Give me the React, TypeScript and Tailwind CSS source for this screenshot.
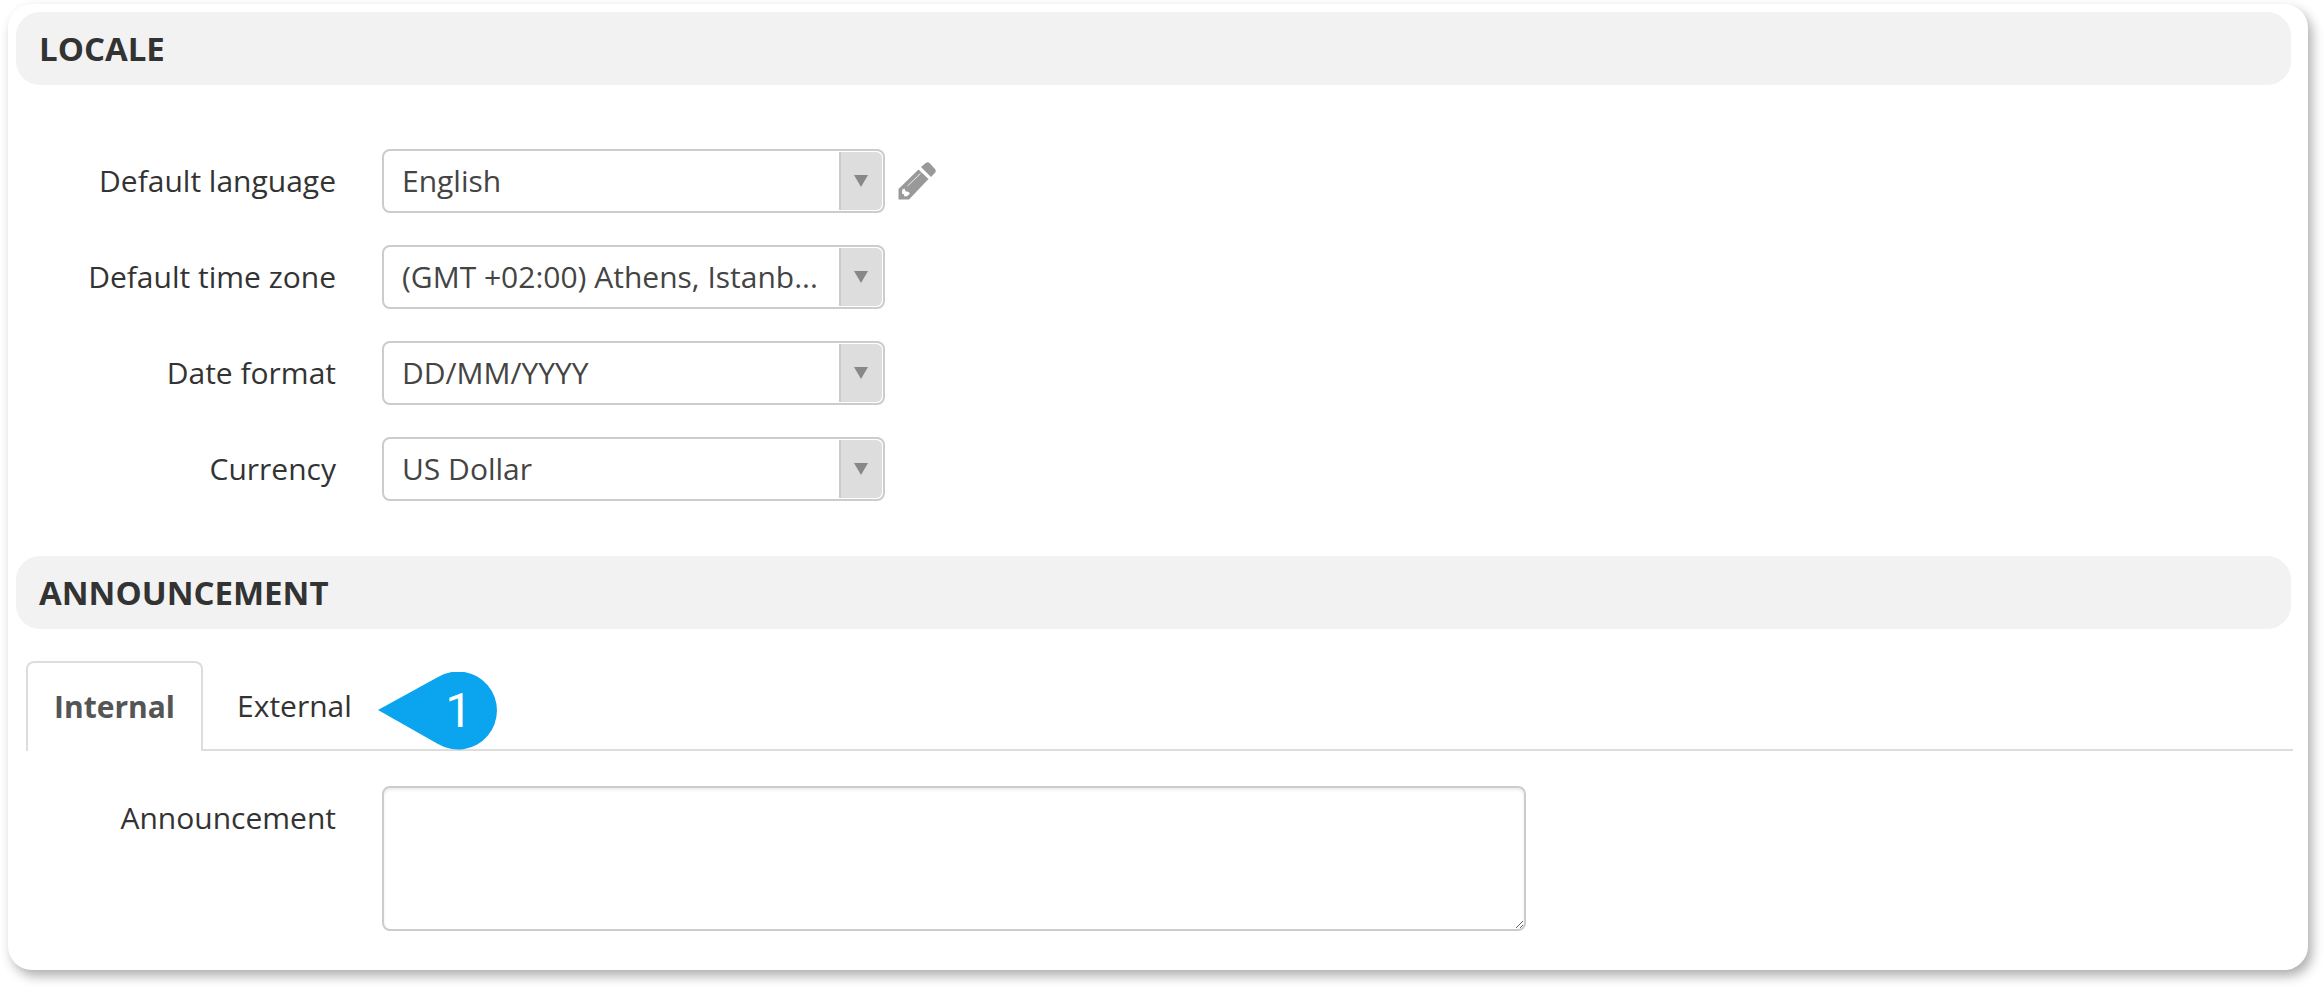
import React, { useState } from "react";

type FieldProps = {
  id: string;
  label: string;
  options: string[];
  children?: React.ReactNode;
};

const SectionTitle = ({ children }: { children: React.ReactNode }) => (
  <h2 className="flex h-[73px] items-center rounded-3xl bg-[#f2f2f2] px-[23px] text-[33px] leading-none font-bold text-[#333333]">
    {children}
  </h2>
);

const SelectField = ({ id, label, options, children }: FieldProps) => (
  <div className="flex items-center">
    <label htmlFor={id} className="w-[328px] shrink-0 text-right">
      {label}
    </label>
    <div className="relative ml-[46px] w-[503px]">
      <select
        id={id}
        className="h-16 w-full appearance-none overflow-hidden rounded-lg border-2 border-[#cccccc] bg-white pr-14 pl-[18px] text-[#444444]"
      >
        {options.map((option) => (
          <option key={option}>{option}</option>
        ))}
      </select>
      {/* arrow box */}
      <span className="pointer-events-none absolute inset-y-[3px] right-[3px] flex w-[43px] items-center justify-center rounded-r-md border-l-2 border-[#cccccc] bg-[#dddddd] pr-px">
        <svg width="14" height="12" viewBox="0 0 14 12" fill="#888888">
          <path d="M0 0h14L7 12z" />
        </svg>
      </span>
    </div>
    {children}
  </div>
);

const PencilIcon = () => (
  <svg width="38" height="38" viewBox="0 0 38 38" fill="#999999">
    <path d="M20.500 7.500 L30.500 17 L11 37.500 H0.500 V27 Z" />
    <path d="M23 5 L28 0.800 Q30 -0.500 31.700 1.200 L37 7 Q38.500 9 37 10.700 L33 15 Z" />
    <path d="M4.300 27.500 L6.500 26.500 L7.500 29.300 L10.800 30 L11.800 31.800 L9 34.300 L6 34.300 L6.200 32.500 L4 31.500 Z" fill="#ffffff" />
    <path d="M9.500 24 L22.500 11.500" stroke="#eeeeee" strokeWidth="1" />
  </svg>
);

const App = () => {
  const [tab, setTab] = useState("internal");

  return (
    <div className="pt-1 pr-4 pb-5 pl-2 font-['Open_Sans',sans-serif] text-[30px] leading-[38px] text-[#333333]">
      <main className="rounded-3xl bg-white pt-2 pb-[39px] shadow-[4px_6px_12px_rgba(0,0,0,0.32)]">
        <section className="pr-[17px] pl-2">
          <SectionTitle>LOCALE</SectionTitle>
        </section>
        <form className="mt-16 mb-[55px] flex flex-col gap-8">
          <SelectField id="language" label="Default language" options={["English"]}>
            <button type="button" aria-label="Edit language" className="ml-[13px]">
              <PencilIcon />
            </button>
          </SelectField>
          <SelectField
            id="timezone"
            label="Default time zone"
            options={["(GMT +02:00) Athens, Istanb..."]}
          />
          <SelectField id="date" label="Date format" options={["DD/MM/YYYY"]} />
          <SelectField id="currency" label="Currency" options={["US Dollar"]} />
        </form>

        <section className="pr-[17px] pl-2">
          <SectionTitle>ANNOUNCEMENT</SectionTitle>
        </section>
        <div className="mt-8 mr-[15px] ml-[18px] flex h-[90px] border-b-2 border-[#dddddd]" role="tablist">
          <button
            type="button"
            role="tab"
            aria-selected={tab === "internal"}
            onClick={() => setTab("internal")}
            className="-mb-[2px] rounded-t-lg border-2 border-b-0 border-[#dddddd] bg-white px-[26px] font-bold text-[#555555]"
          >
            Internal
          </button>
          <button
            type="button"
            role="tab"
            aria-selected={tab === "external"}
            onClick={() => setTab("external")}
            className="relative px-[34px] pt-[2px]"
          >
            External
            {/* step marker */}
            <span className="absolute top-[11px] left-full -ml-2 block h-[78px] w-[120px]">
              <svg width="120" height="78" viewBox="0 0 120 78" fill="#0aa5ee">
                <path d="M0 38 L60 5 A39 39 0 1 1 60 72 Z" />
              </svg>
              <span className="absolute inset-y-0 right-0 flex w-[78px] items-center justify-center font-['Roboto',sans-serif] text-5xl text-white">
                1
              </span>
            </span>
          </button>
        </div>
        <div className="mt-[35px] flex">
          <label htmlFor="announcement" className="mt-[13px] w-[328px] shrink-0 text-right">
            Announcement
          </label>
          <textarea
            id="announcement"
            className="ml-[46px] block h-[145px] w-[1144px] rounded-lg border-2 border-[#cccccc] bg-white p-4 shadow-[inset_0_2px_3px_rgba(0,0,0,0.08)]"
          />
        </div>
      </main>
    </div>
  );
};

export default App;
